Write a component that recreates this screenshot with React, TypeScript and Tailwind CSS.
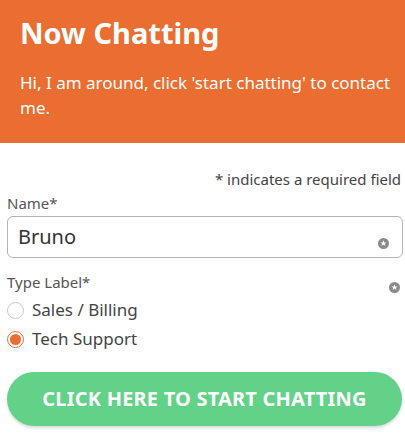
import React from "react";

const StarDot = ({ className = "" }: { className?: string }) => (
  <svg width="11" height="11" viewBox="0 0 11 11" className={className}>
    <circle cx="5.5" cy="5.5" r="5.5" fill="#8a8a8a" />
    <path
      d="M5.5 2.3 L6.3 4.4 L8.5 4.4 L6.75 5.7 L7.4 7.9 L5.5 6.6 L3.6 7.9 L4.25 5.7 L2.5 4.4 L4.7 4.4 Z"
      fill="#ffffff"
    />
  </svg>
);

export default function App() {
  return (
    <div className="w-[405px] h-[435px] bg-white overflow-hidden" style={{ fontFamily: '"Noto Sans", "Open Sans", sans-serif' }}>
      <div className="bg-[#ea6e31] h-[143px] pl-[20px] pr-[8px] pt-[14px]">
        <h1 className="text-white font-bold text-[29px] leading-[38px]">Now Chatting</h1>
        <p className="text-white text-[17px] leading-[25px] mt-[18px]">
          Hi, I am around, click 'start chatting' to contact me.
        </p>
      </div>
      <div className="pl-[7px] pr-[2px]">
        <div className="text-right text-[15px] text-[#444] leading-[20px] mt-[26px] pr-[2px]">* indicates a required field</div>
        <div className="text-[15px] text-[#555] leading-[20px] mt-[4px]">Name*</div>
        <div className="relative mt-[3px] h-[42px] border border-[#b3b3b3] rounded-[6px] flex items-center px-[10px]">
          <span className="text-[20px] text-[#333]">Bruno</span>
          <StarDot className="absolute right-[13px] top-[21px]" />
        </div>
        <div className="relative mt-[14px] text-[15px] text-[#555] leading-[20px]">
          Type Label*
          <StarDot className="absolute right-[3px] top-[10px]" />
        </div>
        <div className="mt-[8px] flex flex-col gap-[9px]">
          <label className="flex items-center gap-[8px] h-[20px]">
            <span className="w-[17px] h-[17px] rounded-full border border-[#c8c8c8] bg-white" />
            <span className="text-[17px] text-[#444]">Sales / Billing</span>
          </label>
          <label className="flex items-center gap-[8px] h-[20px]">
            <span className="w-[17px] h-[17px] rounded-full border border-[#ea6e31] bg-white flex items-center justify-center">
              <span className="w-[11px] h-[11px] rounded-full bg-[#ea6e31]" />
            </span>
            <span className="text-[17px] text-[#444]">Tech Support</span>
          </label>
        </div>
        <button className="mt-[23px] w-[395px] h-[54px] rounded-full bg-[#62d288] text-white font-bold text-[20px] tracking-[0.2px] shadow-[0_2px_3px_rgba(0,0,0,0.15)]">
          CLICK HERE TO START CHATTING
        </button>
      </div>
    </div>
  );
}
